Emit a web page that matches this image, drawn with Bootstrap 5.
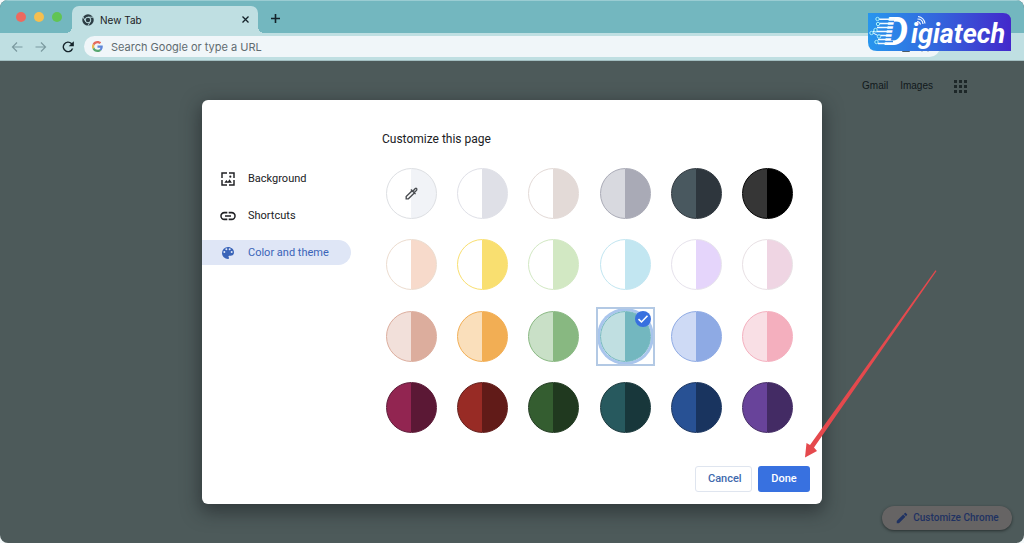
<!DOCTYPE html>
<html lang="en">
<head>
<meta charset="utf-8">
<meta name="viewport" content="width=device-width, initial-scale=1">
<title>New Tab</title>
<link href="https://cdn.jsdelivr.net/npm/bootstrap@5.3.0/dist/css/bootstrap.min.css" rel="stylesheet">
<style>
  body { background: #f4f9fa; font-family: Roboto, "Liberation Sans", sans-serif; font-size: 11px; line-height: 16px; color: #202124; }
  .browser { border-radius: 8px; overflow: hidden; background: #4d5a5a; }
  .bare { border: 0; background: none; padding: 0; line-height: 0; color: #14232a; }
  .strip { background: #73b7bf; height: 33px; box-shadow: inset 0 1px #9accd2; font-family: Inter, sans-serif; }
  .lights { gap: 8px; padding: 0 10px 0 16px; }
  .light { width: 10px; height: 10px; border-radius: 50%; }
  .tab { position: relative; width: 186px; height: 27px; background: #bfdfe2; border-radius: 7px 7px 0 0; font-size: 10px; padding: 0 9px 0 10px; gap: 6px; }
  .tab::before, .tab::after { content: ""; position: absolute; bottom: 0; width: 6px; height: 6px; }
  .tab::before { left: -6px; background: radial-gradient(circle at 0 0, transparent 6px, #bfdfe2 6px); }
  .tab::after { right: -6px; background: radial-gradient(circle at 100% 0, transparent 6px, #bfdfe2 6px); }
  .toolbar { background: #bfdfe2; height: 28px; padding: 0 18px 0 11px; border-bottom: 1px solid #a3bfc2; }
  .reload { margin: 0 9px 0 14px; }
  .omnibox { height: 21px; border-radius: 11px; background: #f0f6f9; padding: 0 8px; }
  .omnibox input { border: 0; background: none; outline: 0; padding: 0; font: 11px/16px Inter, sans-serif; }
  .omnibox input::placeholder { color: #5f6b70; opacity: 1; }
  .extras { width: 58px; }
  .brand { position: absolute; top: 13px; right: 13px; z-index: 5; overflow: visible; font-family: Roboto, sans-serif; font-weight: 700; font-style: italic; }
  .topnav { height: 39px; padding: 17px 57px 0 0; font: 10px/16px "Liberation Sans", Arial, sans-serif; }
  .topnav a { color: #10181a; }
  .dialog { width: 620px; min-height: 404px; background: #fff; border-radius: 6px; box-shadow: 0 6px 18px 2px rgba(25,30,32,.55); }
  .side { width: 149px; padding-top: 66px; row-gap: 12px; }
  .side button { height: 25px; border: 0; background: none; padding: 0 0 0 18px; border-radius: 0 13px 13px 0; color: #202124; text-align: left; }
  .side button.active { background: #dfe6f6; color: #3a64b8; }
  .panel { padding: 31px 29px 0 31px; }
  .panel h1 { font-size: 12px; line-height: 16px; font-weight: 400; margin: 0 0 21px; }
  .swatches { display: grid; grid-template-columns: repeat(6, 51px); justify-content: space-between; align-content: space-between; min-height: 265px; padding: 0 0 0 4px; }
  .swatch { position: relative; display: block; width: 51px; height: 51px; }
  .swatch input { appearance: none; display: block; width: 100%; height: 100%; margin: 0; border-radius: 50%; border: 1px solid var(--edge, var(--b)); background: linear-gradient(90deg, var(--a) 50%, var(--b) 50%) border-box; }
  .swatch input:checked { box-shadow: 0 0 0 3px #a9c5ec; }
  .swatch.picked::before { content: ""; position: absolute; inset: -4px; border: 2px solid #b3c9e4; }
  .swatch svg { position: absolute; }
  .dropper { left: 18px; top: 18px; }
  .tick { right: 0; top: 0; }
  .actions { padding: 0 12px 12px; gap: 6px; }
  .actions button { height: 26px; font-size: 11px; line-height: 16px; font-weight: 500; border-radius: 3px; padding: 0 12px; }
  .cancel { border: 1px solid #dfe5ef; color: #4069ad; background: #fff; width: 57px; }
  .done { background: #3871e0; color: #fff; width: 52px; border: 0; }
  .pointer { position: absolute; right: -116px; bottom: 44px; pointer-events: none; z-index: 3; }
  .foot { height: 39px; padding: 2px 12px 0 0; }
  .customize { width: 130px; height: 24px; border: 0; border-radius: 12px; background: #666464; color: #1f3262; box-shadow: 0 1px 3px rgba(15,20,20,.6); padding: 0; font-size: 10px; font-weight: 500; }
</style>
</head>
<body>
<div class="browser position-relative d-flex flex-column min-vh-100">
  <header>
    <div class="strip d-flex align-items-end">
      <div class="lights d-flex align-self-center">
        <span class="light" style="background:#ed6a5f"></span>
        <span class="light" style="background:#f5bf4f"></span>
        <span class="light" style="background:#61c454"></span>
      </div>
      <div class="tab d-flex align-items-center flex-shrink-0">
        <svg width="12" height="12" viewBox="0 0 24 24" aria-hidden="true"><circle cx="12" cy="12" r="11.5" fill="#2c3d44"/><circle cx="12" cy="12" r="5.6" fill="none" stroke="#bfdfe2" stroke-width="2"/><path d="M12 6.4h10.5M7.2 14.8L2 5.8M16.8 14.8l-5.1 9" stroke="#bfdfe2" stroke-width="1.8"/></svg>
        <span class="flex-grow-1">New Tab</span>
        <button class="bare" aria-label="Close tab"><svg width="7" height="7" viewBox="0 0 7 7" stroke="currentColor" stroke-width="1.3"><path d="M.5.5l6 6M6.500.5l-6 6"/></svg></button>
      </div>
      <button class="bare align-self-center ms-2 ps-1 pt-1" aria-label="New tab"><svg width="11" height="11" viewBox="0 0 11 11" stroke="currentColor" stroke-width="1.6"><path d="M5.500 1v9M1 5.500h9"/></svg></button>
    </div>
    <div class="toolbar d-flex align-items-center">
      <button class="bare" aria-label="Back"><svg width="12" height="12" viewBox="0 0 12 12" fill="none" stroke="#7b9a9f" stroke-width="1.2"><path d="M11.500 6h-10M6 1.500L1.500 6 6 10.500"/></svg></button>
      <button class="bare ms-2 ps-1" aria-label="Forward"><svg width="12" height="12" viewBox="0 0 12 12" fill="none" stroke="#7b9a9f" stroke-width="1.2"><path d="M.5 6h10M6 1.500L10.500 6 6 10.500"/></svg></button>
      <button class="bare reload" aria-label="Reload"><svg width="14" height="14" viewBox="0 0 24 24" fill="currentColor"><path d="M18.700 5.300A9.300 9.300 0 1 0 21 14.500h-2.600A6.900 6.900 0 1 1 17 7l-3.800 3.800H22V2z"/></svg></button>
      <div class="omnibox d-flex align-items-center flex-grow-1">
        <svg width="11" height="11" viewBox="0 0 48 48" aria-hidden="true"><path fill="#e46a5c" d="M24 9.500c3.500 0 6.700 1.200 9.200 3.600l6.900-6.900C35.900 2.400 30.500 0 24 0 14.600 0 6.500 5.400 2.600 13.200l8 6.200C12.400 13.700 17.700 9.500 24 9.500z"/><path fill="#5e86d8" d="M47 24.500c0-1.600-.2-3.100-.4-4.500H24v9h12.900c-.6 3-2.300 5.500-4.700 7.200l7.700 6C44.400 38 47 31.800 47 24.500z"/><path fill="#e9b94e" d="M10.500 28.600a14.500 14.500 0 0 1 0-9.200l-8-6.200a24 24 0 0 0 0 21.600z"/><path fill="#58a871" d="M24 48c6.500 0 11.900-2.100 15.900-5.800l-7.700-6c-2.200 1.500-4.900 2.300-8.200 2.300-6.300 0-11.600-4.200-13.500-9.900l-8 6.200C6.500 42.600 14.600 48 24 48z"/></svg>
        <input class="flex-grow-1 ms-2" type="text" aria-label="Address" placeholder="Search Google or type a URL">
        <svg width="30" height="13" viewBox="0 0 30 13" fill="none" stroke="#4b5b64" aria-hidden="true"><path d="M.5 4.500h7v7h-7zM20 11.500l3-4 3 4"/></svg>
      </div>
      <div class="extras ms-2 ps-1"><svg width="54" height="13" viewBox="0 0 54 13" fill="#22343c" aria-hidden="true"><path d="M1 3h10v8H1zM43 5h2v2h-2zM43 9h2v2h-2z"/></svg></div>
    </div>
  </header>

  <svg class="brand" width="143" height="38" viewBox="0 0 143 38" role="img" aria-label="Digiatech">
    <defs><linearGradient id="bg"><stop offset="0" stop-color="#2796ee"/><stop offset=".5" stop-color="#3464dc"/><stop offset="1" stop-color="#4328cb"/></linearGradient></defs>
    <path d="M0 0h135q8 0 8 8v30H9q-9 0-9-9z" fill="url(#bg)"/>
    <text x="16" y="32" fill="#fff" font-size="38">D</text>
    <path d="M15 8.500h11M15 12.500h11M15 16.500h11M15 20.500h10M15 24.500h10M15 28.500h10" stroke="#2e87e6" stroke-width="1.500"/>
    <g fill="none" stroke="#f3faff" stroke-width="1.500"><path d="M11 6.200h16M12 10.500h10M9 14.500h12M5 18.500h15M10 22.500h9M10 26.500h9M10 30.500h9"/><path d="M5 20l5 2.500" stroke-width="1"/><g fill="#2693dc" stroke="#a8f0ff" stroke-width="1"><circle cx="9.500" cy="6" r="1.700"/><circle cx="10" cy="11" r="1.700"/><circle cx="3.500" cy="20" r="1.700"/><circle cx="7.500" cy="17" r="1.700"/><circle cx="11" cy="23.500" r="1.700"/><circle cx="8.500" cy="29" r="1.700"/></g><path d="M49 8.500q3 0 3.500 3M49.500 6q5 0 5.500 5M50 3.500q6 1 7 7" stroke-width="1.200"/></g>
    <text x="43" y="30" fill="#fff" font-size="27">igiatech</text>
  </svg>

  <main class="flex-grow-1 d-flex flex-column">
    <nav class="topnav d-flex justify-content-end align-items-start">
      <a href="#" class="text-decoration-none me-2">Gmail</a>
      <a href="#" class="text-decoration-none ms-1">Images</a>
      <button class="bare ms-3 ps-1" aria-label="Google apps"><svg width="14" height="16" viewBox="0 0 14 16" fill="#1d2728"><path d="M1 2h3v3H1zM6 2h3v3H6zM11 2h3v3h-3zM1 7h3v3H1zM6 7h3v3H6zM11 7h3v3h-3zM1 12h3v3H1zM6 12h3v3H6zM11 12h3v3h-3z"/></svg></button>
    </nav>

    <section class="dialog position-relative m-auto d-flex flex-column" role="dialog" aria-labelledby="heading">
      <div class="d-flex">
        <div class="side d-flex flex-column">
          <button class="d-flex align-items-center"><svg class="me-2" width="16" height="16" viewBox="0 0 24 24" fill="none" stroke="currentColor" stroke-width="2.200"><path d="M10.500 3H3v7.500M13.500 3H21v7.500M10.500 21H3v-7.500M13.500 21H21v-7.500"/><path d="M6.500 17.500l3-4 2.300 2.700 2.500-3.700 3.500 5z" fill="currentColor" stroke="none"/><circle cx="15.500" cy="8.500" r="1.600" fill="currentColor" stroke="none"/></svg><span class="ms-1">Background</span></button>
          <button class="d-flex align-items-center"><svg class="me-2" width="16" height="16" viewBox="0 0 24 24" fill="currentColor"><path d="M2.600 12c0-2.200 1.700-3.900 3.900-3.900H11V5.800H6.500a6.200 6.200 0 0 0 0 12.400H11v-2.300H6.500A3.900 3.900 0 0 1 2.600 12zM7.500 13.200h9v-2.400h-9zM17.500 5.800H13v2.300h4.500a3.900 3.900 0 0 1 0 7.800H13v2.300h4.500a6.200 6.200 0 0 0 0-12.400z"/></svg><span class="ms-1">Shortcuts</span></button>
          <button class="active d-flex align-items-center"><svg class="me-2" width="16" height="16" viewBox="0 0 24 24" fill="currentColor"><path d="M12 3a9 9 0 0 0 0 18c.8 0 1.500-.7 1.500-1.500 0-.4-.2-.7-.4-1-.2-.3-.4-.6-.4-1 0-.8.7-1.500 1.500-1.500H16a5 5 0 0 0 5-5c0-4.400-4-8-9-8zm-5.500 9a1.500 1.500 0 1 1 0-3 1.500 1.500 0 0 1 0 3zm3-4a1.500 1.500 0 1 1 0-3 1.500 1.500 0 0 1 0 3zm5 0a1.500 1.500 0 1 1 0-3 1.500 1.500 0 0 1 0 3zm3 4a1.500 1.500 0 1 1 0-3 1.500 1.500 0 0 1 0 3z"/></svg><span class="ms-1">Color and theme</span></button>
        </div>
        <div class="panel flex-grow-1">
          <h1 id="heading">Customize this page</h1>
          <div class="swatches" role="radiogroup" aria-labelledby="heading">
            <label class="swatch" style="--a:#fff;--b:#f1f3f7;--edge:#dddfe3"><input type="radio" name="theme" aria-label="Custom color"><svg class="dropper" width="15" height="15" viewBox="0 0 24 24" fill="none" stroke="#494c50" stroke-width="2.200"><path d="M13 7.500l3.500 3.500L7 20.500H3.500V17zM11 5.500l7.500 7.500M14.500 8l3.500-4q2-1 2.500 1 .5 1-.5 2l-3.500 3.500"/></svg></label>
            <label class="swatch" style="--a:#fff;--b:#dfe0e7"><input type="radio" name="theme" aria-label="Light grey"></label>
            <label class="swatch" style="--a:#fff;--b:#e3dad7"><input type="radio" name="theme" aria-label="Warm grey"></label>
            <label class="swatch" style="--a:#d8d9df;--b:#a9aab6"><input type="radio" name="theme" aria-label="Cool grey"></label>
            <label class="swatch" style="--a:#49585f;--b:#2e363d"><input type="radio" name="theme" aria-label="Slate"></label>
            <label class="swatch" style="--a:#363636;--b:#000"><input type="radio" name="theme" aria-label="Black"></label>

            <label class="swatch" style="--a:#fff;--b:#f7dacb;--edge:#ecdccf"><input type="radio" name="theme" aria-label="Peach"></label>
            <label class="swatch" style="--a:#fff;--b:#f9df70"><input type="radio" name="theme" aria-label="Yellow"></label>
            <label class="swatch" style="--a:#fff;--b:#d2e8c3"><input type="radio" name="theme" aria-label="Light green"></label>
            <label class="swatch" style="--a:#fff;--b:#c2e6f1"><input type="radio" name="theme" aria-label="Light blue"></label>
            <label class="swatch" style="--a:#fff;--b:#e5d5fb;--edge:#e6e2ec"><input type="radio" name="theme" aria-label="Lavender"></label>
            <label class="swatch" style="--a:#fff;--b:#efd5e3;--edge:#e8e0e4"><input type="radio" name="theme" aria-label="Light pink"></label>

            <label class="swatch" style="--a:#f2e0da;--b:#dcad9d"><input type="radio" name="theme" aria-label="Beige"></label>
            <label class="swatch" style="--a:#fadfbb;--b:#f2ae54"><input type="radio" name="theme" aria-label="Orange"></label>
            <label class="swatch" style="--a:#c9e0c7;--b:#88b881"><input type="radio" name="theme" aria-label="Green"></label>
            <label class="swatch picked" style="--a:#c0dfe1;--b:#73b7bf"><input type="radio" name="theme" aria-label="Aqua" checked><svg class="tick" width="16" height="16" viewBox="0 0 16 16"><circle cx="8" cy="8" r="8" fill="#3870df"/><path d="M3.500 8.200l3 2.800 6-6.200" fill="none" stroke="#fff" stroke-width="1.600"/></svg></label>
            <label class="swatch" style="--a:#cedaf5;--b:#8eaae4"><input type="radio" name="theme" aria-label="Blue"></label>
            <label class="swatch" style="--a:#f9dfe5;--b:#f4afbe"><input type="radio" name="theme" aria-label="Pink"></label>

            <label class="swatch" style="--a:#922551;--b:#5b1835"><input type="radio" name="theme" aria-label="Burgundy"></label>
            <label class="swatch" style="--a:#982b25;--b:#611b18"><input type="radio" name="theme" aria-label="Dark red"></label>
            <label class="swatch" style="--a:#345d30;--b:#20391f"><input type="radio" name="theme" aria-label="Dark green"></label>
            <label class="swatch" style="--a:#27595e;--b:#18373b"><input type="radio" name="theme" aria-label="Dark aqua"></label>
            <label class="swatch" style="--a:#285194;--b:#19345f"><input type="radio" name="theme" aria-label="Dark blue"></label>
            <label class="swatch" style="--a:#68439a;--b:#432b64"><input type="radio" name="theme" aria-label="Purple"></label>
          </div>
        </div>
      </div>
      <div class="actions d-flex justify-content-end mt-auto">
        <button class="cancel">Cancel</button>
        <button class="done">Done</button>
      </div>
      <svg class="pointer" width="134" height="192" viewBox="0 0 134 192" aria-hidden="true"><path d="M132.500 3L10 179.500l3 3.500L1 189.500 2.500 175l3.500 2L131.500 2.200z" fill="#e5494d"/></svg>
    </section>

    <div class="foot d-flex justify-content-end align-items-start">
      <button class="customize d-flex align-items-center justify-content-center"><svg class="me-1" width="14" height="14" viewBox="0 0 24 24" fill="currentColor"><path d="M3 17.200V21h3.800L17.900 9.900l-3.800-3.800zM20.700 7c.4-.4.4-1 0-1.400l-2.300-2.300c-.4-.4-1-.4-1.400 0l-1.900 1.800 3.800 3.800z"/></svg><span>Customize Chrome</span></button>
    </div>
  </main>
</div>
<script src="https://cdn.jsdelivr.net/npm/bootstrap@5.3.0/dist/js/bootstrap.bundle.min.js"></script>
</body>
</html>
